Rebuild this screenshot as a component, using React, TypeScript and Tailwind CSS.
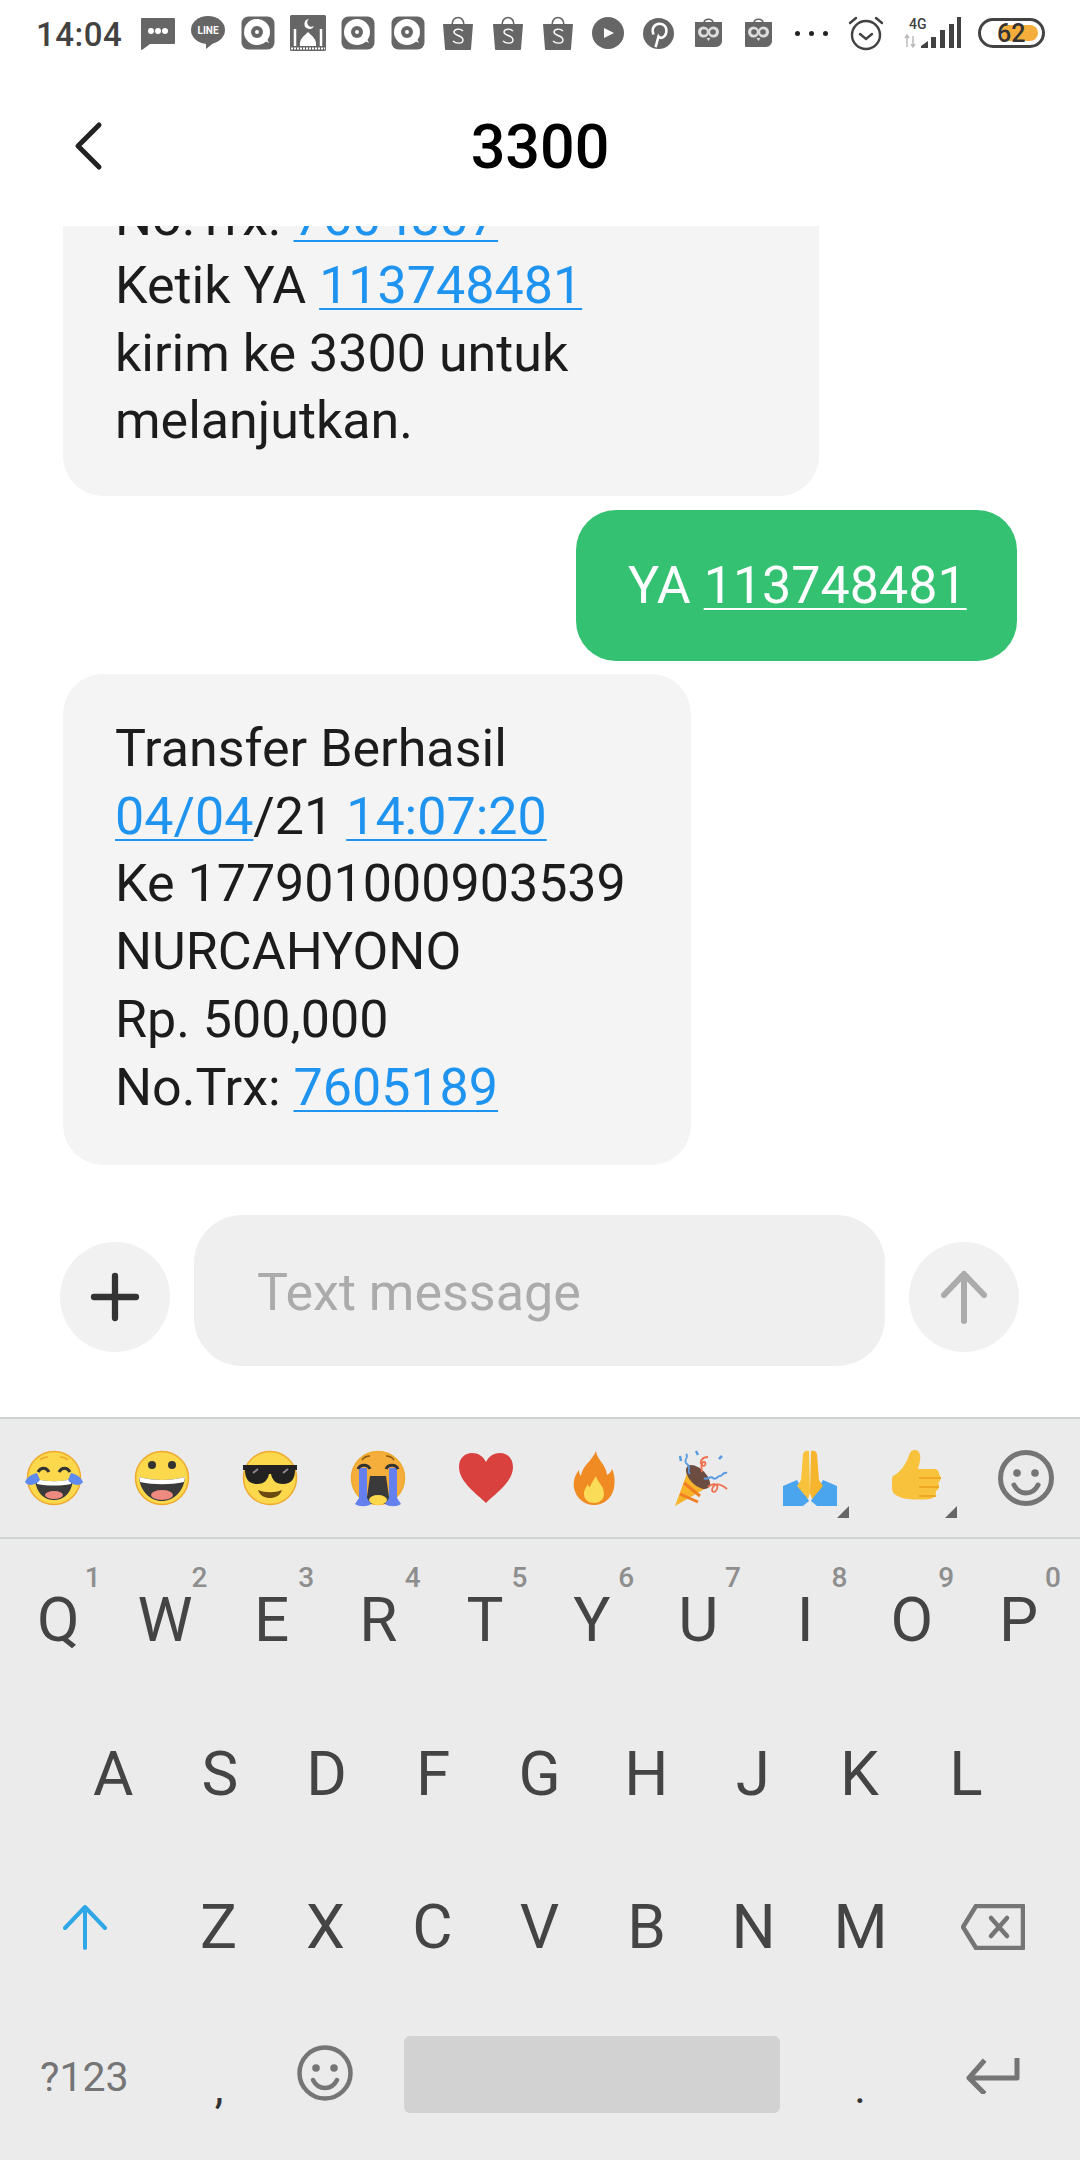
import { Plus } from 'lucide-react';

const ROW1 = [['Q', '1'], ['W', '2'], ['E', '3'], ['R', '4'], ['T', '5'], ['Y', '6'], ['U', '7'], ['I', '8'], ['O', '9'], ['P', '0']];
const ROW2 = ['A', 'S', 'D', 'F', 'G', 'H', 'J', 'K', 'L'];
const ROW3 = ['Z', 'X', 'C', 'V', 'B', 'N', 'M'];

function Smiley({ size, stroke = 5 }: { size: number; stroke?: number }) {
  return (
    <svg width={size} height={size} viewBox="0 0 56 56" fill="none" stroke="#757575">
      <circle cx="28" cy="28" r="25.5" strokeWidth={stroke} />
      <circle cx="19" cy="23" r="3.8" fill="#757575" stroke="none" />
      <circle cx="37" cy="23" r="3.8" fill="#757575" stroke="none" />
      <path d="M16 35c3 6 7 8 12 8s9-2 12-8" strokeWidth={stroke} strokeLinecap="round" />
    </svg>
  );
}

function Face({ children, fill = '#fbd84c' }: { children?: React.ReactNode; fill?: string }) {
  return (
    <svg width="60" height="60" viewBox="0 0 60 60">
      <circle cx="30" cy="30" r="26.5" fill={fill} stroke="#efa92e" strokeWidth="1.5" />
      {children}
    </svg>
  );
}

function Corner() {
  return <span className="absolute right-[-9px] bottom-[-10px] w-0 h-0 border-l-[12px] border-l-transparent border-b-[12px] border-b-[#666]" />;
}

function EmojiRow() {
  return (
    <div className="h-[118px] grid grid-cols-10 items-center justify-items-center bg-[#ebebeb]">
      <Face>
        <path d="M14 24c3-5 8-5 11 0M35 24c3-5 8-5 11 0" stroke="#333" strokeWidth="3" fill="none" />
        <path d="M16 12c3-3 6-3 8-3M44 12c-3-3-6-3-8-3" stroke="#efa92e" strokeWidth="1.5" fill="none" />
        <path d="M11 31c12 3 26 3 38 0-1 14-9 21-19 21s-18-7-19-21z" fill="#3a3a3a" />
        <path d="M12 31c12 3 24 3 36 0l-1 5c-11 2-23 2-34 0z" fill="#fff" />
        <ellipse cx="30" cy="47" rx="9" ry="4" fill="#ef8a80" />
        <path d="M1 34c2-5 7-8 12-9l3 7c-3 5-12 7-15 2zM59 34c-2-5-7-8-12-9l-3 7c3 5 12 7 15 2z" fill="#5f8aee" />
      </Face>
      <Face>
        <circle cx="20" cy="17" r="4" fill="#333" />
        <circle cx="40" cy="17" r="4" fill="#333" />
        <path d="M7 29c14 4 32 4 46 0-1 14-11 24-23 24S8 43 7 29z" fill="#3a3a3a" />
        <path d="M7 29c14 4 32 4 46 0l-1 5c-14 3-30 3-44 0z" fill="#fff" />
        <ellipse cx="30" cy="47" rx="11" ry="5" fill="#ef8a80" />
      </Face>
      <Face>
        <path d="M3 17h54v5h-2c0 9-4 14-12 14-8 0-11-5-12-10h-2c-1 5-4 10-12 10-8 0-12-5-12-14H3z" fill="#222" />
        <path d="M18 42c7 3 17 3 24 0-2 6-7 8-12 8s-10-2-12-8z" fill="#6b4a12" />
        <path d="M13 25l5-4M43 25l5-4" stroke="#888" strokeWidth="2" />
      </Face>
      <Face fill="#f5ae3c">
        <path d="M14 12c2-3 6-4 8-4M46 12c-2-3-6-4-8-4" stroke="#8a5a10" strokeWidth="1.5" fill="none" />
        <path d="M22 28h16l4 28H18z" fill="#3a3a3a" />
        <ellipse cx="30" cy="52" rx="9" ry="5" fill="#fbd84c" />
        <path d="M11 20h8v30l4 6c-4 3-12 3-16 0l4-6zM41 20h8v30l4 6c-4 3-12 3-16 0l4-6z" fill="#6480ee" />
        <path d="M10 21c2-5 10-5 12 0M38 21c2-5 10-5 12 0" stroke="#333" strokeWidth="3" fill="none" />
      </Face>
      <svg width="60" height="60" viewBox="0 0 60 60">
        <path d="M30 55C21 46 3 34 3 19 3 10 9 5 16 5c6 0 11 3 14 9 3-6 8-9 14-9 7 0 13 5 13 14 0 15-18 27-27 36z" fill="#d9413f" />
      </svg>
      <svg width="60" height="60" viewBox="0 0 60 60">
        <path d="M32 3c1 9 10 13 11 24 2-1 4-3 5-6 3 6 3 13 2 19-2 10-10 17-20 17S12 50 10 40c-1-7 1-13 5-18 0 3 1 5 2 6 1-10 11-15 15-25z" fill="#f08a23" />
        <path d="M32 28c1 6 8 9 8 18 0 6-5 9-10 9s-10-3-10-9c0-5 3-8 4-10 0 2 1 3 2 3 1-4 4-7 6-11z" fill="#fbdc58" />
      </svg>
      <svg width="60" height="60" viewBox="0 0 60 60" fill="none">
        <path d="M3 58l14-38 19 19z" fill="#f7b32b" />
        <path d="M8 46l18 8M12 35l16 13" stroke="#f07f24" strokeWidth="3" />
        <ellipse cx="26" cy="29" rx="8" ry="15" transform="rotate(-45 26 29)" fill="#6d4c41" />
        <path d="M14 6c4 3-4 6 1 10s-1 6 3 10" stroke="#5b9be0" strokeWidth="1.8" />
        <path d="M36 9c-6 0-9 5-6 8s5-3 2-3-3 5-2 10" stroke="#f0714f" strokeWidth="1.8" />
        <path d="M32 30c3 3 6-3 9 0s5-3 7-2 3-5 7-3" stroke="#5b9be0" strokeWidth="2" />
        <path d="M36 39c5-5 11-3 9 2s-7 3-4-2 10-2 14 2" stroke="#f0714f" strokeWidth="1.8" />
        <path d="M8 8l1 5M24 3l2 4M47 11l3-3" stroke="#5b9be0" strokeWidth="2.5" />
      </svg>
      <span className="relative flex">
        <svg width="60" height="60" viewBox="0 0 60 60">
          <path d="M3 38l14-6 12 21-6 5H3zM57 38l-14-6-12 21 6 5h20z" fill="#4aa5ee" />
          <path d="M29 3c-3-1-5 0-6 3l-2 26-4 6 11 13 2-6z" fill="#f9c23c" />
          <path d="M31 3c3-1 5 0 6 3l2 26 4 6-11 13-2-6z" fill="#f6b52d" />
        </svg>
        <Corner />
      </span>
      <span className="relative flex">
        <svg width="60" height="60" viewBox="0 0 60 60">
          <path d="M5 28c6-3 12-10 15-18 2-6 3-8 7-8 5 0 6 6 5 11l-2 8h16c3 0 5 2 5 5 2 1 2 8-1 9 2 2 1 7-2 8 0 5-2 7-6 8-9 1-24 1-30-2-5-2-8-4-8-9V34c0-3 0-5 1-6z" fill="#f9c23c" />
          <path d="M31 30h22M31 39h20M31 48h17" stroke="#eda924" strokeWidth="2" />
        </svg>
        <Corner />
      </span>
      <Smiley size={56} />
    </div>
  );
}

function ChatTile() {
  return (
    <svg width="34" height="34" viewBox="0 0 34 34">
      <rect width="33" height="33" x="0.5" y="0.5" rx="7" fill="#666" />
      <circle cx="16" cy="16" r="13" fill="#fff" />
      <path d="M22 24l6 3-4-8z" fill="#fff" />
      <circle cx="16" cy="16" r="6" fill="#666" />
      <circle cx="16" cy="16" r="2" fill="#fff" />
    </svg>
  );
}

function ShopTile() {
  return (
    <svg width="30" height="34" viewBox="0 0 30 34">
      <path d="M9 9c0-10 12-10 12 0" stroke="#666" strokeWidth="1.6" fill="none" />
      <path d="M0 8h30l-2 25c0 .5-.5 1-1 1H3c-.5 0-1-.5-1-1z" fill="#666" />
      <path d="M20 15c-3-3-9-2-9 1 0 4 9 3 9 8 0 4-7 4-10 1" stroke="#fff" strokeWidth="1.4" fill="none" />
    </svg>
  );
}

function OwlTile() {
  return (
    <svg width="27" height="30" viewBox="0 0 27 30">
      <path d="M9 5c0-5 9-5 9 0" stroke="#666" strokeWidth="1.6" fill="none" />
      <path d="M0 4h27v19c0 3-3 6-6 6H1c-.5 0-1-.5-1-1z" fill="#666" />
      <circle cx="8.500" cy="14" r="5.500" fill="#ddd" />
      <circle cx="18.500" cy="14" r="5.500" fill="#ddd" />
      <circle cx="9" cy="14" r="2.800" fill="#666" />
      <circle cx="18" cy="14" r="2.800" fill="#666" />
      <path d="M11.500 20h4l-2 3z" fill="#ddd" />
    </svg>
  );
}

function Slot({ children }: { children: React.ReactNode }) {
  return <span className="w-[50px] flex items-center justify-center">{children}</span>;
}

function StatusBar() {
  return (
    <div className="h-[70px] flex items-center pl-[36px] pb-[4px] bg-white text-[#424242]">
      <span className="text-[33px] font-medium w-[97px] tracking-[0.5px] mt-[3px]">14:04</span>
      <Slot>
        <svg width="34" height="32" viewBox="0 0 34 32" className="mt-[2px]">
          <path d="M1 0h32c.5 0 1 .5 1 1v24c0 .5-.5 1-1 1H9l-8 6c-.5 0-1-.5-1-1V1c0-.5.5-1 1-1z" fill="#666" />
          <circle cx="10" cy="13" r="3" fill="#fff" />
          <circle cx="17" cy="13" r="3" fill="#fff" />
          <circle cx="24" cy="13" r="3" fill="#fff" />
        </svg>
      </Slot>
      <Slot>
        <svg width="34" height="34" viewBox="0 0 34 34">
          <ellipse cx="17" cy="14" rx="17" ry="14" fill="#666" />
          <path d="M15 26v7l10-8z" fill="#666" />
          <text x="17" y="18" textAnchor="middle" fontSize="10" fontWeight="700" fill="#fff" fontFamily="Roboto, sans-serif">LINE</text>
        </svg>
      </Slot>
      <Slot><ChatTile /></Slot>
      <Slot>
        <svg width="36" height="36" viewBox="0 0 36 36">
          <rect width="36" height="36" rx="1.5" fill="#666" />
          <path d="M10 31c-1-7 4-10 8-14 4 4 9 7 8 14z" fill="#fff" />
          <path d="M5 14v17M31 14v17" stroke="#fff" strokeWidth="2.5" />
          <path d="M1 33.500h34" stroke="#fff" strokeWidth="2" strokeDasharray="2 1" />
          <path d="M19 4a5 5 0 1 0 5 7 4 4 0 1 1-5-7z" fill="#fff" />
        </svg>
      </Slot>
      <Slot><ChatTile /></Slot>
      <Slot><ChatTile /></Slot>
      <Slot><ShopTile /></Slot>
      <Slot><ShopTile /></Slot>
      <Slot><ShopTile /></Slot>
      <Slot>
        <svg width="32" height="32" viewBox="0 0 32 32">
          <circle cx="16" cy="16" r="16" fill="#666" />
          <path d="M12 11l10 5-10 5z" fill="#fff" />
        </svg>
      </Slot>
      <Slot>
        <svg width="31" height="31" viewBox="0 0 32 32">
          <circle cx="16" cy="16" r="16" fill="#666" />
          <path d="M11 17c-3-6 1-11 6-11s8 4 7 9-6 7-8 4l-3 11" stroke="#fff" strokeWidth="2.6" fill="none" />
        </svg>
      </Slot>
      <Slot><OwlTile /></Slot>
      <Slot><OwlTile /></Slot>
      <Slot>
        <span className="flex gap-[9px] ml-[6px]">
          <span className="w-[5px] h-[5px] rounded-full bg-[#222]" />
          <span className="w-[5px] h-[5px] rounded-full bg-[#222]" />
          <span className="w-[5px] h-[5px] rounded-full bg-[#222]" />
        </span>
      </Slot>
      <svg width="36" height="36" viewBox="0 0 36 36" fill="none" stroke="#424242" strokeWidth="2.4" className="ml-[15px]">
        <circle cx="18" cy="20" r="14" />
        <path d="M12 19l6 5 6-5M2 8l6-5M34 8l-6-5" strokeLinecap="round" />
      </svg>
      <svg width="57" height="34" viewBox="0 0 57 34" className="ml-[20px]">
        <text x="5" y="13" fontSize="14" fontWeight="500" fill="#424242" fontFamily="Roboto, sans-serif">4G</text>
        <path d="M3 31v-11M1 22l2-3 2 3M9 20v11M7 28l2 3 2-3" stroke="#bbb" strokeWidth="1.500" fill="none" />
        <path d="M17 30l7-5v7h-7zM27 21h5v11h-5zM36 14h5v18h-5zM45 8h5v24h-5zM53 1h4v31h-4z" fill="#424242" />
      </svg>
      <span className="relative ml-[17px] flex items-center w-[67px] h-[30px] rounded-full border-[3px] border-[#424242] text-[25px] text-[#333] font-medium leading-none">
        <span className="absolute left-[21px] top-[4px] bottom-[4px] right-[4px] rounded-r-full bg-[#f5ae3c]" />
        <span className="relative pl-[16px]">62</span>
      </span>
    </div>
  );
}

function Link({ children }: { children: React.ReactNode }) {
  return <span className="text-[#1e93f0] underline decoration-2 underline-offset-[5px]">{children}</span>;
}

function Thread() {
  return (
    <div className="h-[989px] overflow-hidden flex flex-col justify-end px-[63px] pb-[50px] text-[52px] leading-[67.7px] text-[#1c1c1c]">
      <div className="w-[756px] shrink-0 bg-[#f4f4f4] rounded-[40px] pl-[52px] pb-[41px]">
        <div>No.Trx: <Link>7604807</Link></div>
        <div>Ketik YA <Link>113748481</Link></div>
        <div>kirim ke 3300 untuk</div>
        <div>melanjutkan.</div>
      </div>
      <div className="self-end shrink-0 mt-[14px] w-[441px] h-[151px] flex items-center pl-[52px] bg-[#34c172] text-white rounded-[40px]">
        <span>YA <span className="underline decoration-2 underline-offset-[5px]">113748481</span></span>
      </div>
      <div className="w-[628px] shrink-0 mt-[13px] h-[491px] bg-[#f4f4f4] rounded-[40px] pl-[52px] pt-[41px]">
        <div>Transfer Berhasil</div>
        <div><Link>04/04</Link>/21 <Link>14:07:20</Link></div>
        <div>Ke 177901000903539</div>
        <div>NURCAHYONO</div>
        <div>Rp. 500,000</div>
        <div>No.Trx: <Link>7605189</Link></div>
      </div>
    </div>
  );
}

function Composer() {
  return (
    <div className="h-[202px] flex items-center pl-[60px] pr-[61px] pb-[51px] gap-[24px] bg-white">
      <span className="w-[110px] h-[110px] mt-[13px] rounded-full bg-[#f1f1f1] flex items-center justify-center">
        <Plus size={72} strokeWidth={2.1} color="#333" />
      </span>
      <div className="w-[691px] h-[151px] rounded-[48px] bg-[#efefef] flex items-center pl-[63px] pt-[5px] text-[52px] text-[#ababab]">
        Text message
      </div>
      <span className="w-[110px] h-[110px] mt-[13px] rounded-full bg-[#f1f1f1] flex items-center justify-center">
        <svg width="46" height="54" viewBox="0 0 46 54" fill="none" stroke="#ababab" strokeWidth="6" strokeLinecap="round" strokeLinejoin="round">
          <path d="M23 51V4M3 25L23 4l20 21" />
        </svg>
      </span>
    </div>
  );
}

function Keyboard() {
  return (
    <div className="flex-1 bg-[#ebebeb] text-[#444] text-[62px] leading-none">
      <div className="h-[2px] bg-[#cfd4d3]" />
      <EmojiRow />
      <div className="h-[2px] bg-[#cfd4d3]" />
      <div className="h-[154px] pt-[8px] flex items-center pl-[5px]">
        {ROW1.map(([key, num]) => (
          <span key={key} className="relative w-[106.7px] text-center">
            {key}
            <span className="absolute right-[11px] top-[-25px] text-[28px] font-medium text-[#8e8e8e]">{num}</span>
          </span>
        ))}
      </div>
      <div className="h-[154px] pt-[8px] flex items-center pl-[60px]">
        {ROW2.map((key) => (
          <span key={key} className="w-[106.6px] text-center">{key}</span>
        ))}
      </div>
      <div className="h-[152px] pt-[8px] flex items-center pl-[58px]">
        <span className="w-[107px] flex justify-center ml-[-27px] mr-[27px]">
          <svg width="44" height="46" viewBox="0 0 44 46" fill="none" stroke="#2fa6e6" strokeWidth="4" strokeLinecap="round" strokeLinejoin="round">
            <path d="M22 44V3M2 24L22 3l20 21" />
          </svg>
        </span>
        {ROW3.map((key) => (
          <span key={key} className="w-[107px] text-center">{key}</span>
        ))}
        <span className="ml-[47px]">
          <svg width="64" height="46" viewBox="0 0 64 46" fill="none" stroke="#757575" strokeWidth="4.500" strokeLinejoin="round">
            <path d="M15 2h47v42H15L2 23z" />
            <path d="M30 14l16 18M46 14L30 32" strokeLinecap="round" />
          </svg>
        </span>
      </div>
      <div className="h-[150px] flex items-center pl-[40px]">
        <span className="w-[139px] text-[41px] text-[#757575] mt-[6px]">?123</span>
        <span className="w-[80px] text-center text-[44px] mt-[28px] text-[#333]">,</span>
        <span className="ml-[38px] mt-[-2px]"><Smiley size={56} stroke={4.5} /></span>
        <span className="w-[376px] h-[77px] ml-[51px] rounded-[6px] bg-[#d2d2d2]" />
        <span className="w-[160px] text-center text-[44px] mt-[28px] text-[#333]">.</span>
        <span className="ml-[26px] mt-[4px]">
          <svg width="54" height="36" viewBox="0 0 54 36" fill="none" stroke="#757575" strokeWidth="5" strokeLinejoin="round" strokeLinecap="square">
            <path d="M51 2v18H5M17 4L3 20l14 14" />
          </svg>
        </span>
      </div>
    </div>
  );
}

export default function App() {
  return (
    <div className="w-[1080px] h-[2160px] overflow-hidden flex flex-col bg-white font-['Roboto',sans-serif]">
      <StatusBar />
      <header className="h-[156px] relative flex items-center justify-center bg-white">
        <svg width="30" height="50" viewBox="0 0 30 50" fill="none" stroke="#222" strokeWidth="5" strokeLinecap="round" strokeLinejoin="round" className="absolute left-[74px] top-[51px]">
          <path d="M25 4L4 25l21 21" />
        </svg>
        <h1 className="text-[61px] font-medium text-black">3300</h1>
      </header>
      <Thread />
      <Composer />
      <Keyboard />
    </div>
  );
}
